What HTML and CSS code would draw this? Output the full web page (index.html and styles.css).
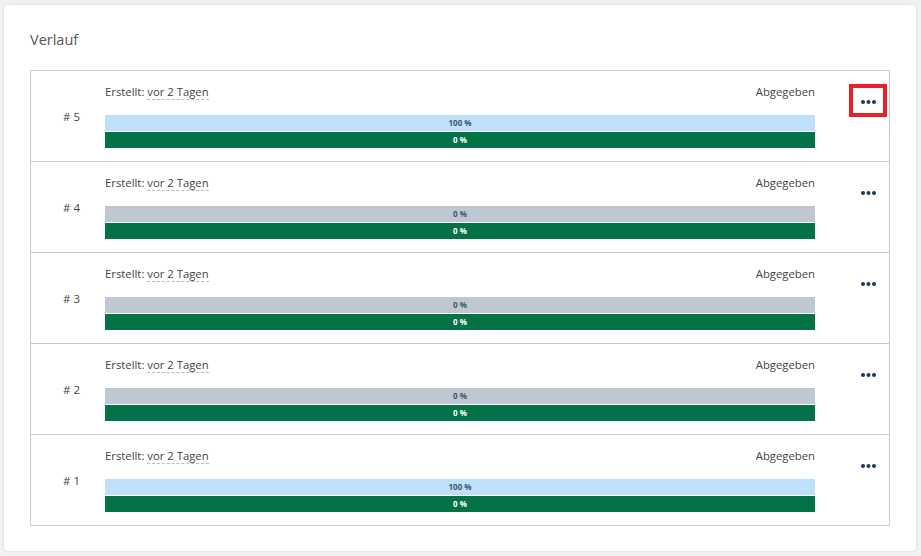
FILE: index.html
```html
<!DOCTYPE html>
<html lang="de">
<head>
<meta charset="utf-8">
<title>Verlauf</title>
<link rel="stylesheet" href="styles.css">
</head>
<body>
<div class="card">
  <h2 class="title">Verlauf</h2>
  <div class="list">
    <div class="row">
      <div class="num"># 5</div>
      <div class="main">
        <div class="meta"><span>Erstellt: <span class="dashed">vor 2 Tagen</span></span><span>Abgegeben</span></div>
        <div class="bar bar-blue">100 %</div>
        <div class="bar bar-green">0 %</div>
      </div>
      <div class="actions"><button class="more highlighted"><svg width="15" height="4" viewBox="0 0 15 4"><circle cx="2" cy="2" r="2"/><circle cx="7.5" cy="2" r="2"/><circle cx="13" cy="2" r="2"/></svg></button></div>
    </div>
    <div class="row">
      <div class="num"># 4</div>
      <div class="main">
        <div class="meta"><span>Erstellt: <span class="dashed">vor 2 Tagen</span></span><span>Abgegeben</span></div>
        <div class="bar bar-gray">0 %</div>
        <div class="bar bar-green">0 %</div>
      </div>
      <div class="actions"><button class="more"><svg width="15" height="4" viewBox="0 0 15 4"><circle cx="2" cy="2" r="2"/><circle cx="7.5" cy="2" r="2"/><circle cx="13" cy="2" r="2"/></svg></button></div>
    </div>
    <div class="row">
      <div class="num"># 3</div>
      <div class="main">
        <div class="meta"><span>Erstellt: <span class="dashed">vor 2 Tagen</span></span><span>Abgegeben</span></div>
        <div class="bar bar-gray">0 %</div>
        <div class="bar bar-green">0 %</div>
      </div>
      <div class="actions"><button class="more"><svg width="15" height="4" viewBox="0 0 15 4"><circle cx="2" cy="2" r="2"/><circle cx="7.5" cy="2" r="2"/><circle cx="13" cy="2" r="2"/></svg></button></div>
    </div>
    <div class="row">
      <div class="num"># 2</div>
      <div class="main">
        <div class="meta"><span>Erstellt: <span class="dashed">vor 2 Tagen</span></span><span>Abgegeben</span></div>
        <div class="bar bar-gray">0 %</div>
        <div class="bar bar-green">0 %</div>
      </div>
      <div class="actions"><button class="more"><svg width="15" height="4" viewBox="0 0 15 4"><circle cx="2" cy="2" r="2"/><circle cx="7.5" cy="2" r="2"/><circle cx="13" cy="2" r="2"/></svg></button></div>
    </div>
    <div class="row">
      <div class="num"># 1</div>
      <div class="main">
        <div class="meta"><span>Erstellt: <span class="dashed">vor 2 Tagen</span></span><span>Abgegeben</span></div>
        <div class="bar bar-blue">100 %</div>
        <div class="bar bar-green">0 %</div>
      </div>
      <div class="actions"><button class="more"><svg width="15" height="4" viewBox="0 0 15 4"><circle cx="2" cy="2" r="2"/><circle cx="7.5" cy="2" r="2"/><circle cx="13" cy="2" r="2"/></svg></button></div>
    </div>
  </div>
</div>
</body>
</html>
```
FILE: styles.css
```css
* { box-sizing: border-box; }
html, body { margin: 0; padding: 0; }
body {
  background: #f2f2f2;
  font-family: "Open Sans", "Noto Sans", sans-serif;
  color: #444;
  width: 921px;
  height: 556px;
  overflow: hidden;
}
.card {
  margin: 5px 0 0 4px;
  width: 912px;
  height: 546px;
  background: #fff;
  border-radius: 4px;
  box-shadow: 0 0 3px rgba(0,0,0,0.12);
  padding: 24px 26px 25px 26px;
}
.title {
  margin: 0 0 19px 0;
  font-size: 14.5px;
  line-height: 22px;
  font-weight: 400;
  color: #555;
}
.list {
  border: 1px solid #c5ccd5;
}
.row {
  display: grid;
  grid-template-columns: 74px 710px 74px;
  height: 91px;
  border-top: 1px solid #c5ccd5;
}
.row:first-child { border-top: none; height: 90px; }
.num {
  display: flex;
  align-items: center;
  padding-left: 32px;
  font-size: 11.5px;
  color: #444;
}
.main {
  padding-top: 11px;
}
.meta {
  display: flex;
  justify-content: space-between;
  font-size: 11.3px;
  line-height: 19px;
  color: #444;
  margin-bottom: 14px;
}
.dashed {
  border-bottom: 1px dashed #b0bccb;
}
.bar {
  height: 16px;
  font-size: 8px;
  font-weight: 700;
  line-height: 16px;
  text-align: center;
}
.bar + .bar { margin-top: 1px; }
.bar-blue { background: #bee0fa; color: #3a5674; }
.bar-gray { background: #bfc7d1; color: #3a5674; }
.bar-green { background: #037246; color: #fff; }
.actions {
  padding: 13px 0 0 34px;
}
.more {
  width: 38px;
  height: 33px;
  padding: 0;
  border: 4px solid transparent;
  background: transparent;
  display: flex;
  align-items: center;
  justify-content: center;
  fill: #1b3a5f;
  cursor: pointer;
}
.more svg { display: block; margin-top: 2px; margin-left: 1px; }
.more.highlighted { border-color: #e8202a; }
```
